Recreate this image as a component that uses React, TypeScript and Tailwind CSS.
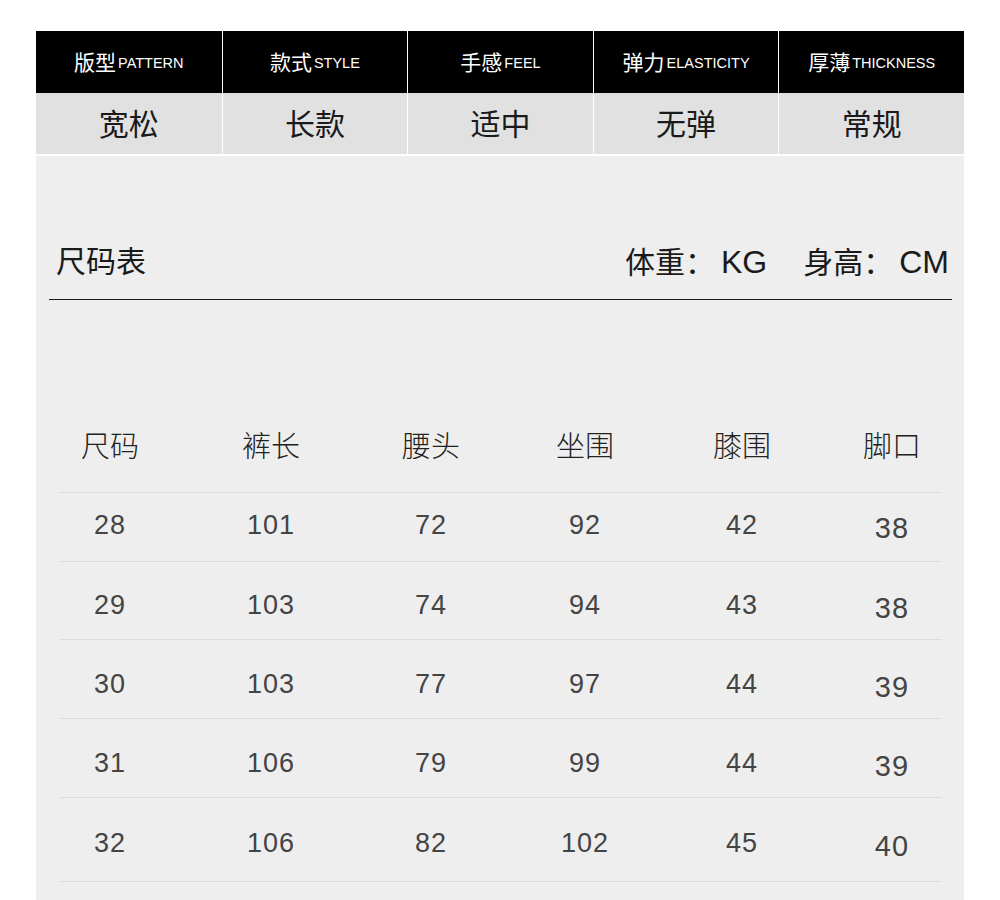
const specs = [
  { cn: "版型", en: "PATTERN", value: "宽松" },
  { cn: "款式", en: "STYLE", value: "长款" },
  { cn: "手感", en: "FEEL", value: "适中" },
  { cn: "弹力", en: "ELASTICITY", value: "无弹" },
  { cn: "厚薄", en: "THICKNESS", value: "常规" },
];

const columns = ["尺码", "裤长", "腰头", "坐围", "膝围", "脚口"];

// row heights and text offsets follow the reference, which is not evenly spaced
const rows = [
  { cls: "h-[69px] pt-[17px]", values: ["28", "101", "72", "92", "42", "38"] },
  { cls: "h-[78px] pt-[28px]", values: ["29", "103", "74", "94", "43", "38"] },
  { cls: "h-[79px] pt-[29px]", values: ["30", "103", "77", "97", "44", "39"] },
  { cls: "h-[79px] pt-[29px]", values: ["31", "106", "79", "99", "44", "39"] },
  { cls: "h-[84px] pt-[30px]", values: ["32", "106", "82", "102", "45", "40"] },
];

const font = "font-['Liberation_Sans','Noto_Sans_CJK_SC',sans-serif]";
const grid = "grid grid-cols-[161px_160px_154px_157px_150px_100px]";

export default function App() {
  return (
    <div className={`w-[1000px] h-[900px] overflow-hidden bg-white pt-[31px] pl-[36px] ${font}`}>
      <div className="w-[928px] h-[869px] bg-[#eeeeee]">
        {/* spec strip */}
        <div className="grid grid-cols-5 h-[62px] bg-black">
          {specs.map((s, i) => (
            <div
              key={s.en}
              className={`flex items-center justify-center gap-[2px] text-white ${i > 0 ? "border-l border-white" : ""}`}
            >
              <span className="text-[21px] leading-none">{s.cn}</span>
              <span className="text-[14.5px] leading-none font-['Liberation_Sans',sans-serif] mt-[2px]">{s.en}</span>
            </div>
          ))}
        </div>
        <div className="grid grid-cols-5 h-[63px] bg-[#e1e1e1] border-b-2 border-white">
          {specs.map((s, i) => (
            <div
              key={s.value}
              className={`flex items-center justify-center pt-[2px] text-[30px] leading-none text-[#1a1a1a] ${i > 0 ? "border-l border-white" : ""}`}
            >
              {s.value}
            </div>
          ))}
        </div>

        {/* title */}
        <div className="mt-[84px] ml-[13px] w-[903px] h-[60px] pt-[7px] pl-[7px] pr-[3px] flex justify-between border-b border-[#1a1a1a] text-[30px] leading-[30px] text-[#1a1a1a]">
          <span>尺码表</span>
          <span className="flex items-baseline gap-[36px]">
            <span>
              体重：<span className="ml-[6px] text-[32px]">KG</span>
            </span>
            <span>
              身高：<span className="ml-[6px] text-[32px]">CM</span>
            </span>
          </span>
        </div>

        {/* size table */}
        <div className="ml-[24px] w-[882px] mt-[132px]">
          <div className={`${grid} h-[61px] border-b border-[#dcdcdc]`}>
            {columns.map((c) => (
              <div key={c} className="w-[100px] text-center text-[29px] leading-[30px] text-[#222] font-light">
                {c}
              </div>
            ))}
          </div>
          {rows.map((r) => (
            <div key={r.values[0]} className={`${grid} ${r.cls} border-b border-[#dcdcdc]`}>
              {r.values.map((v, i) => (
                <div
                  key={i}
                  className={`w-[100px] text-center leading-[30px] text-[#444] font-['Liberation_Sans',sans-serif] tracking-[1px] ${
                    i === 5 ? "text-[29px] pt-[3px]" : "text-[27px]"
                  }`}
                >
                  {v}
                </div>
              ))}
            </div>
          ))}
        </div>
      </div>
    </div>
  );
}
